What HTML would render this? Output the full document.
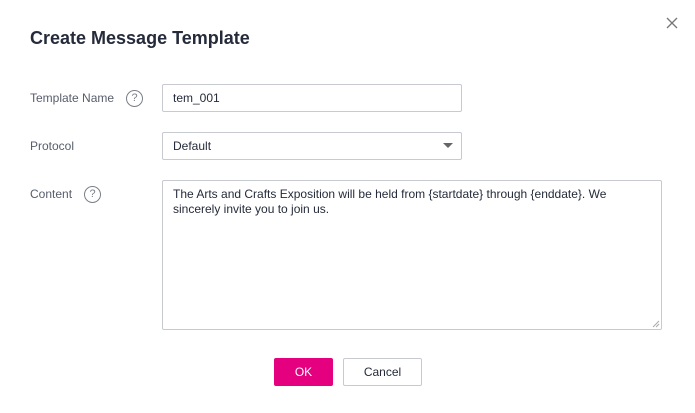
<!DOCTYPE html>
<html><head><style>
*{margin:0;padding:0;box-sizing:border-box}
body{width:695px;height:413px;background:#fff;font-family:"Liberation Sans",Arial,sans-serif;position:relative;overflow:hidden;color:#252b3a}
.a{position:absolute}
.t{left:30px;top:28px;font-size:18px;font-weight:bold;color:#252b3a}
.l{left:30px;font-size:12px;color:#575d6c}
.box{border:1px solid #c7cacf;border-radius:2px;font-size:12px;color:#252b3a;padding-left:10px}
.q{width:17px;height:17px;border:1.3px solid #7a7f88;border-radius:50%;font-size:11px;color:#7a7f88;text-align:center;line-height:15px}
</style></head><body>
<div class="a t">Create Message Template</div>
<svg class="a" style="left:666px;top:17px" width="12" height="12"><path d="M1 1L11 11M11 1L1 11" stroke="#777" stroke-width="1.3"/></svg>
<div class="a l" style="top:91px">Template Name</div>
<div class="a q" style="left:126px;top:90px">?</div>
<div class="a box" style="left:162px;top:84px;width:300px;height:28px;line-height:26px">tem_001</div>
<div class="a l" style="top:139px">Protocol</div>
<div class="a box" style="left:162px;top:132px;width:300px;height:28px;line-height:26px">Default</div>
<svg class="a" style="left:443px;top:142px" width="10" height="7"><path d="M0 1H10L5 6Z" fill="#666"/></svg>
<div class="a l" style="top:187px">Content</div>
<div class="a q" style="left:84px;top:186px">?</div>
<div class="a box" style="left:162px;top:180px;width:500px;height:150px;padding-top:6px;line-height:15px">The Arts and Crafts Exposition will be held from {startdate} through {enddate}. We<br>sincerely invite you to join us.</div>
<svg class="a" style="left:652px;top:320px" width="8" height="8"><path d="M7 1L1 7M7 4L4 7" stroke="#aaa" stroke-width="1"/></svg>
<div class="a" style="left:274px;top:358px;width:59px;height:28px;background:#e5007f;border-radius:2px;color:#fff;font-size:12px;text-align:center;line-height:28px">OK</div>
<div class="a" style="left:343px;top:358px;width:79px;height:28px;border:1px solid #c7cacf;border-radius:2px;color:#252b3a;font-size:12px;text-align:center;line-height:26px">Cancel</div>
</body></html>
